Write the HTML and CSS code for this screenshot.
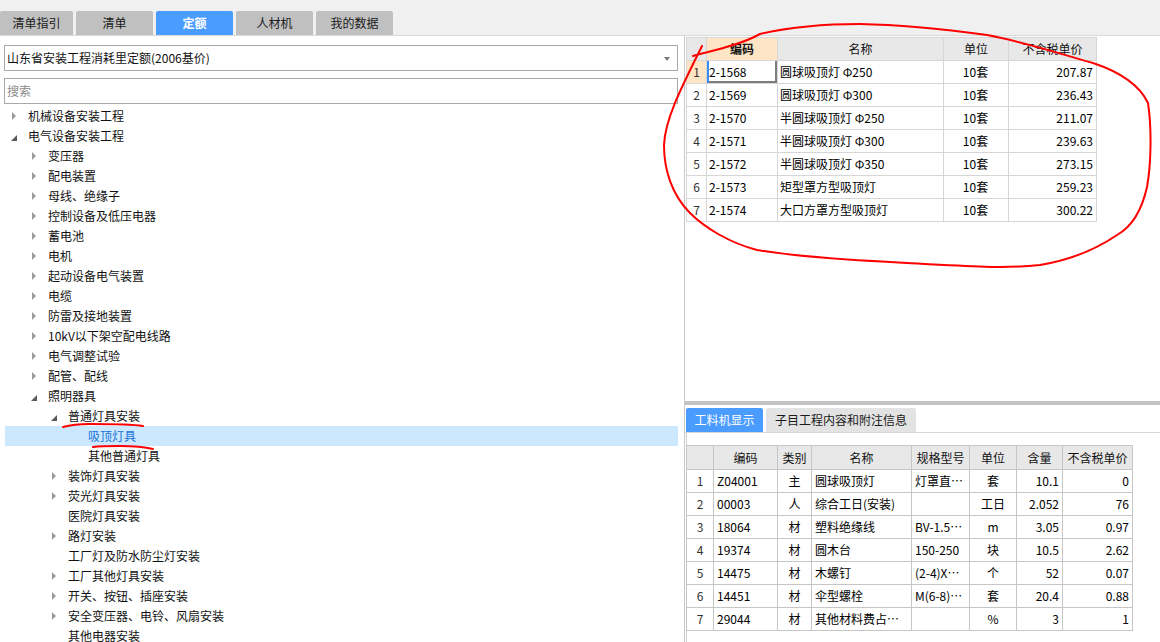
FILE: index.html
```html
<!DOCTYPE html>
<html lang="zh-CN">
<head>
<meta charset="utf-8">
<title>定额</title>
<link rel="stylesheet" href="styles.css">
</head>
<body>
<div class="app">
  <div class="topbar">
    <div class="tab first">清单指引</div>
    <div class="tab">清单</div>
    <div class="tab active">定额</div>
    <div class="tab">人材机</div>
    <div class="tab">我的数据</div>
  </div>
  <div class="main">
    <div class="left">
      <div class="select">山东省安装工程消耗里定额(2006基价)<span class="caret"></span></div>
      <div class="search">搜索</div>
      <ul class="tree">
        <li class="l0 c"><i></i>机械设备安装工程</li>
        <li class="l0 e"><i></i>电气设备安装工程</li>
        <li class="l1 c"><i></i>变压器</li>
        <li class="l1 c"><i></i>配电装置</li>
        <li class="l1 c"><i></i>母线、绝缘子</li>
        <li class="l1 c"><i></i>控制设备及低压电器</li>
        <li class="l1 c"><i></i>蓄电池</li>
        <li class="l1 c"><i></i>电机</li>
        <li class="l1 c"><i></i>起动设备电气装置</li>
        <li class="l1 c"><i></i>电缆</li>
        <li class="l1 c"><i></i>防雷及接地装置</li>
        <li class="l1 c"><i></i>10kV以下架空配电线路</li>
        <li class="l1 c"><i></i>电气调整试验</li>
        <li class="l1 c"><i></i>配管、配线</li>
        <li class="l1 e"><i></i>照明器具</li>
        <li class="l2 e"><i></i>普通灯具安装</li>
        <li class="l3 n sel"><i></i>吸顶灯具</li>
        <li class="l3 n"><i></i>其他普通灯具</li>
        <li class="l2 c"><i></i>装饰灯具安装</li>
        <li class="l2 c"><i></i>荧光灯具安装</li>
        <li class="l2 n"><i></i>医院灯具安装</li>
        <li class="l2 c"><i></i>路灯安装</li>
        <li class="l2 n"><i></i>工厂灯及防水防尘灯安装</li>
        <li class="l2 c"><i></i>工厂其他灯具安装</li>
        <li class="l2 c"><i></i>开关、按钮、插座安装</li>
        <li class="l2 c"><i></i>安全变压器、电铃、风扇安装</li>
        <li class="l2 n"><i></i>其他电器安装</li>
      </ul>
    </div>
    <div class="right">
      <div class="upper">
        <table class="grid gtop">
          <colgroup><col class="w20"><col class="w71"><col class="w166"><col class="w65"><col class="w88"></colgroup>
          <thead>
            <tr><th></th><th class="hcur">编码</th><th>名称</th><th>单位</th><th>不含税单价</th></tr>
          </thead>
          <tbody>
            <tr><td class="rn rcur">1</td><td class="cur">2-1568</td><td>圆球吸顶灯 Φ250</td><td class="ct">10套</td><td class="rt">207.87</td></tr>
            <tr><td class="rn">2</td><td>2-1569</td><td>圆球吸顶灯 Φ300</td><td class="ct">10套</td><td class="rt">236.43</td></tr>
            <tr><td class="rn">3</td><td>2-1570</td><td>半圆球吸顶灯 Φ250</td><td class="ct">10套</td><td class="rt">211.07</td></tr>
            <tr><td class="rn">4</td><td>2-1571</td><td>半圆球吸顶灯 Φ300</td><td class="ct">10套</td><td class="rt">239.63</td></tr>
            <tr><td class="rn">5</td><td>2-1572</td><td>半圆球吸顶灯 Φ350</td><td class="ct">10套</td><td class="rt">273.15</td></tr>
            <tr><td class="rn">6</td><td>2-1573</td><td>矩型罩方型吸顶灯</td><td class="ct">10套</td><td class="rt">259.23</td></tr>
            <tr><td class="rn">7</td><td>2-1574</td><td>大口方罩方型吸顶灯</td><td class="ct">10套</td><td class="rt">300.22</td></tr>
          </tbody>
        </table>
      </div>
      <div class="splitter"></div>
      <div class="lower">
        <div class="subtabs">
          <div class="stab active">工料机显示</div>
          <div class="stab wide">子目工程内容和附注信息</div>
        </div>
        <div class="lowbody">
          <table class="grid gbot">
            <colgroup><col class="w27"><col class="w64"><col class="w34"><col class="w100"><col class="w58"><col class="w47"><col class="w46"><col class="w70"></colgroup>
            <thead>
              <tr><th></th><th>编码</th><th>类别</th><th>名称</th><th>规格型号</th><th>单位</th><th>含量</th><th>不含税单价</th></tr>
            </thead>
            <tbody>
              <tr><td class="rn">1</td><td>Z04001</td><td class="ct">主</td><td>圆球吸顶灯</td><td>灯罩直…</td><td class="ct">套</td><td class="rt">10.1</td><td class="rt">0</td></tr>
              <tr><td class="rn">2</td><td>00003</td><td class="ct">人</td><td>综合工日(安装)</td><td></td><td class="ct">工日</td><td class="rt">2.052</td><td class="rt">76</td></tr>
              <tr><td class="rn">3</td><td>18064</td><td class="ct">材</td><td>塑料绝缘线</td><td>BV-1.5…</td><td class="ct">m</td><td class="rt">3.05</td><td class="rt">0.97</td></tr>
              <tr><td class="rn">4</td><td>19374</td><td class="ct">材</td><td>圆木台</td><td>150-250</td><td class="ct">块</td><td class="rt">10.5</td><td class="rt">2.62</td></tr>
              <tr><td class="rn">5</td><td>14475</td><td class="ct">材</td><td>木螺钉</td><td>(2-4)X…</td><td class="ct">个</td><td class="rt">52</td><td class="rt">0.07</td></tr>
              <tr><td class="rn">6</td><td>14451</td><td class="ct">材</td><td>伞型螺栓</td><td>M(6-8)…</td><td class="ct">套</td><td class="rt">20.4</td><td class="rt">0.88</td></tr>
              <tr><td class="rn">7</td><td>29044</td><td class="ct">材</td><td>其他材料费占…</td><td></td><td class="ct">%</td><td class="rt">3</td><td class="rt">1</td></tr>
            </tbody>
          </table>
        </div>
      </div>
    </div>
  </div>
  <svg class="ink" width="1160" height="642" viewBox="0 0 1160 642">
    <path d="M693,56 C715,50 740,45 760,34 C790,27 830,24 860,24 C910,25 950,30 987,35 C1030,43 1070,57 1093,63 C1120,72 1140,86 1148,103 C1152,130 1151,165 1147,187 C1143,205 1135,225 1117,235 C1095,250 1070,260 1040,265 C1005,269 960,266 907,263 C850,260 790,256 757,250 C730,243 705,228 690,213 C672,195 664,170 664,145 C665,120 680,90 702,46"/>
    <path d="M63,427 C70,425 80,424 90,424 C110,424 130,424 143,426"/>
    <path d="M93,447 C100,446 110,446 120,446 C135,446 145,447 153,449"/>
  </svg>
</div>
</body>
</html>
```

FILE: styles.css
```css
* { box-sizing: border-box; }
html, body { margin: 0; padding: 0; }
body {
  width: 1160px;
  height: 642px;
  overflow: hidden;
  background: #fff;
  color: #000;
  font-family: "Noto Sans CJK SC", "Noto Sans", sans-serif;
  font-size: 12px;
  line-height: 14px;
}
.app { position: relative; width: 1160px; height: 642px; overflow: hidden; }

/* top tabs */
.topbar {
  height: 36px;
  background: #f0f0f0;
  border-bottom: 1px solid #d9d9d9;
  display: flex;
  align-items: flex-end;
  gap: 3px;
}
.tab {
  width: 77px;
  height: 24px;
  background: #c0c0c0;
  border-radius: 2px 2px 0 0;
  display: flex;
  align-items: center;
  justify-content: center;
  color: #1a1a1a;
  font-size: 12px;
}
.tab.first { width: 73px; }
.tab.active { background: #4a9cff; color: #fff; font-weight: 700; }

.main { display: flex; height: 606px; }

/* left panel */
.left {
  width: 685px;
  flex: none;
  border-right: 1px solid #c9c9c9;
  padding-top: 9px;
}
.select {
  position: relative;
  margin-left: 4px;
  width: 674px;
  height: 26px;
  border: 1px solid #a9a9a9;
  padding-left: 2px;
  display: flex;
  align-items: center;
  color: #111;
}
.caret {
  position: absolute;
  right: 7px;
  top: 11px;
  border-top: 4px solid #7a7a7a;
  border-left: 3px solid transparent;
  border-right: 3px solid transparent;
}
.search {
  margin: 7px 0 0 4px;
  width: 674px;
  height: 26px;
  border: 1px solid #a9a9a9;
  padding-left: 2px;
  display: flex;
  align-items: center;
  color: #8c8c8c;
}
.tree {
  list-style: none;
  margin: 2px 0 0 5px;
  padding: 0;
  width: 673px;
}
.tree li {
  height: 20px;
  display: flex;
  align-items: center;
  white-space: nowrap;
  color: #111;
}
.tree li i { position: relative; width: 17px; height: 20px; flex: none; }
.tree li.l0 { padding-left: 6px; }
.tree li.l1 { padding-left: 26px; }
.tree li.l2 { padding-left: 46px; }
.tree li.l3 { padding-left: 66px; }
.tree li.c i::before {
  content: "";
  position: absolute;
  left: 1px;
  top: 6px;
  border-left: 4px solid #9b9b9b;
  border-top: 4px solid transparent;
  border-bottom: 4px solid transparent;
}
.tree li.e i::before {
  content: "";
  position: absolute;
  left: 0;
  top: 9px;
  border-bottom: 6px solid #5a5a5a;
  border-left: 6px solid transparent;
}
.tree li.sel { background: #cce8ff; color: #1a73d6; }

/* right panel */
.right { flex: 1; display: flex; flex-direction: column; min-width: 0; }
.upper { height: 365px; padding: 1px 0 0 1px; }
.splitter { height: 4px; background: #c3c3c3; flex: none; }
.lower { flex: 1; display: flex; flex-direction: column; }
.subtabs {
  height: 28px;
  padding: 3px 0 0 1px;
  border-bottom: 1px solid #d6d6d6;
  display: flex;
  gap: 3px;
  flex: none;
}
.stab {
  width: 77px;
  height: 24px;
  background: #e3e3e3;
  display: flex;
  align-items: center;
  justify-content: center;
  color: #1a1a1a;
  border-radius: 2px 2px 0 0;
}
.stab.wide { width: 150px; }
.stab.active { background: #4a9cff; color: #fff; }
.lowbody { flex: 1; margin-left: 1px; border-left: 1px solid #cfcfcf; padding-top: 12px; }
.lowbody .grid { margin-left: -1px; }

/* grids */
.grid {
  border-collapse: collapse;
  table-layout: fixed;
}
.grid th, .grid td {
  padding: 0 3px;
  white-space: nowrap;
  overflow: hidden;
  vertical-align: middle;
  text-align: left;
}
.grid th { background: #e8e8e8; font-weight: 400; text-align: center; color: #111; }
.grid .rn { text-align: center; color: #333; padding: 0; }
.grid .ct { text-align: center; }
.grid .rt { text-align: right; }

.gtop th, .gtop td { border: 1px solid #d6d6d6; }
.gtop thead tr { height: 23px; }
.gtop tbody tr { height: 23px; }
.gtop td { padding-left: 2px; }
.gtop td.rt { padding-right: 3px; }
.gtop th.hcur { background: #fde5c6; font-weight: 700; }
.gtop td.rcur { background: #fde5c6; }
.gtop td.cur { box-shadow: inset 2px 0 0 #3b8cf0, inset -2px -2px 0 #7d7d7d; }

.gbot th, .gbot td { border: 1px solid #c6c6c6; }
.gbot thead tr { height: 24px; }
.gbot tbody tr { height: 23px; }

.w20 { width: 20px; } .w71 { width: 71px; } .w166 { width: 166px; } .w65 { width: 65px; } .w88 { width: 88px; }
.w27 { width: 27px; } .w64 { width: 64px; } .w34 { width: 34px; } .w100 { width: 100px; } .w58 { width: 58px; }
.w47 { width: 47px; } .w46 { width: 46px; } .w70 { width: 70px; }

/* hand-drawn red annotation */
.ink {
  position: absolute;
  left: 0;
  top: 0;
  pointer-events: none;
  fill: none;
  stroke: #ff0000;
  stroke-width: 2;
  stroke-linecap: round;
  stroke-linejoin: round;
}
```
